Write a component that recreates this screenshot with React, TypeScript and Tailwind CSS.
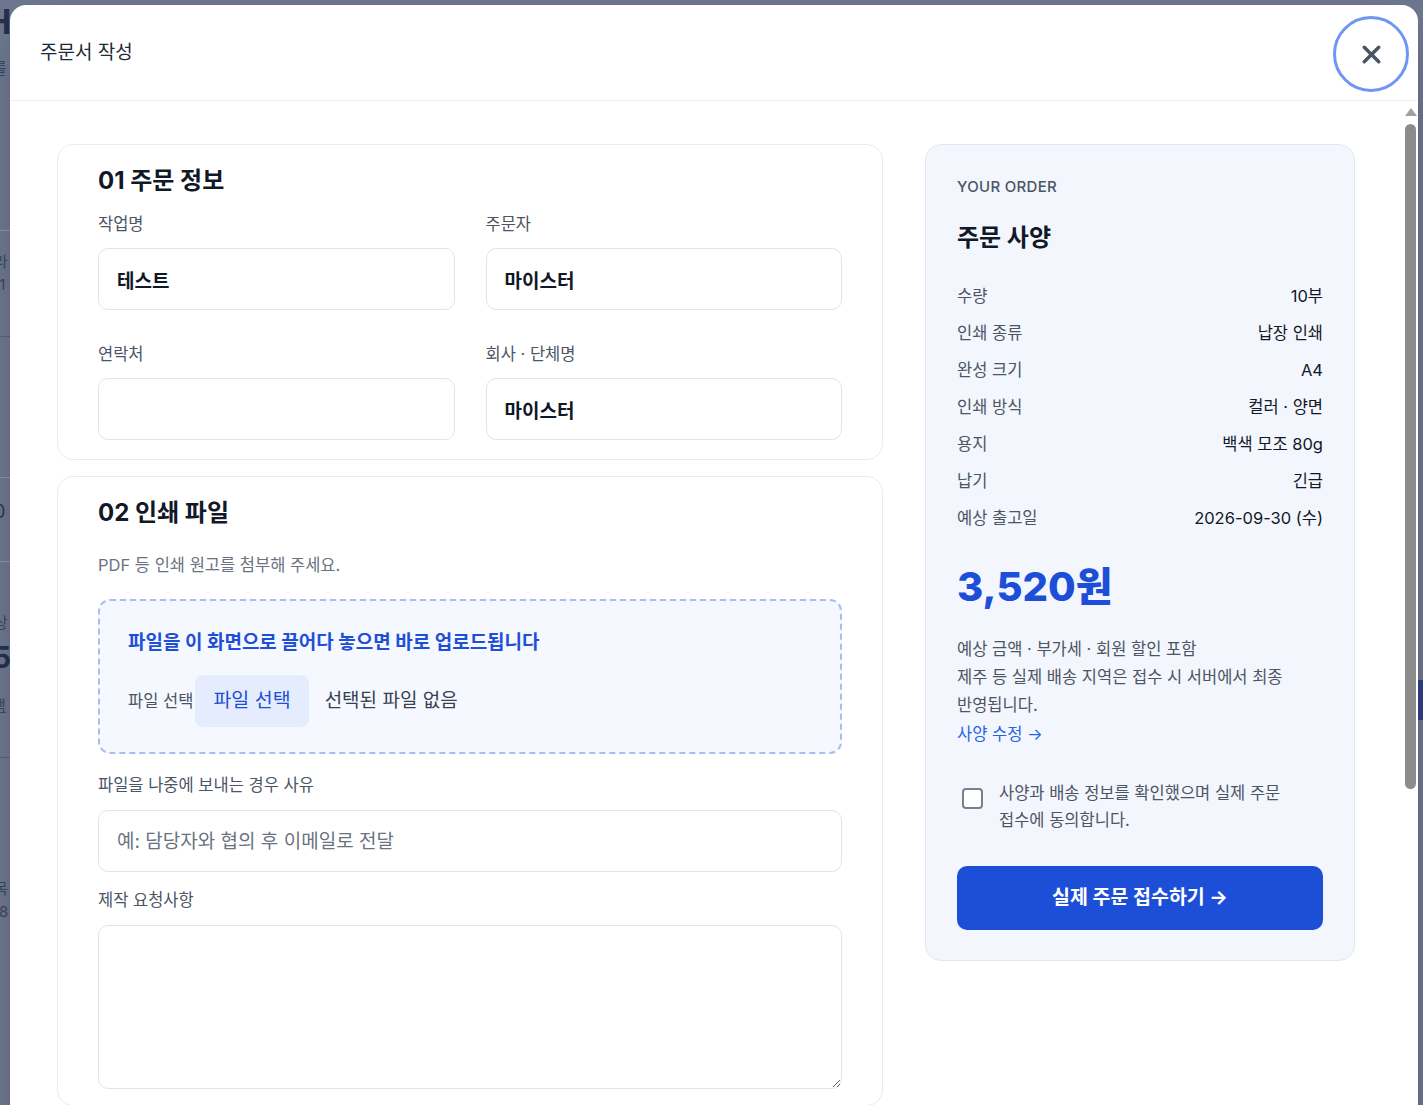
import { X } from "lucide-react";

const specs = [
  ["수량", "10부"],
  ["인쇄 종류", "납장 인쇄"],
  ["완성 크기", "A4"],
  ["인쇄 방식", "컬러 · 양면"],
  ["용지", "백색 모조 80g"],
  ["납기", "긴급"],
  ["예상 출고일", "2026-09-30 (수)"],
];

function Field({ label, value, placeholder }: { label: string; value?: string; placeholder?: string }) {
  return (
    <label className="block">
      <span className="mb-3 block text-[16.5px] leading-6 text-[#4b5563]">{label}</span>
      <input
        readOnly
        value={value ?? ""}
        placeholder={placeholder}
        className="h-[62px] w-full rounded-[10px] border border-[#dfe5ef] bg-white px-[18px] text-[19px] font-semibold text-[#111827] outline-none placeholder:font-normal placeholder:text-[#6b7280]"
      />
    </label>
  );
}

function Card({ title, children }: { title: string; children: React.ReactNode }) {
  return (
    <section className="rounded-2xl border border-[#e6ebf3] bg-white px-10 pt-[19px] pb-[19px]">
      <h2 className="pt-px text-[24px] font-bold leading-8 text-[#111827]">{title}</h2>
      {children}
    </section>
  );
}

export default function App() {
  return (
    <div className="relative h-[1105px] overflow-hidden break-keep bg-[#6d7690] font-[Inter,'Noto_Sans_CJK_KR',sans-serif]">
      {/* page behind the overlay */}
      <div className="flex flex-col text-[#25304a]">
        <div className="-ml-[14px] mt-[2px] text-[34px] font-bold leading-10">H</div>
        <div className="-ml-[8px] mt-[14px] text-[16px] text-[#3b4560]">를</div>
        <div className="mt-[150px] h-px w-[10px] bg-[#8a93ab]" />
        <div className="-ml-[6px] mt-[20px] text-[15px] text-[#3b4560]">라</div>
        <div className="-ml-[10px] text-[15px] text-[#3b4560]">31</div>
        <div className="mt-[40px] h-px w-[10px] bg-[#56607c]" />
        <div className="mt-[140px] h-px w-[10px] bg-[#8a93ab]" />
        <div className="-ml-[6px] mt-[20px] text-[18px] text-[#2b3550]">0</div>
        <div className="mt-[36px] h-px w-[10px] bg-[#8a93ab]" />
        <div className="-ml-[6px] mt-[50px] text-[15px] text-[#3b4560]">상</div>
        <div className="-ml-[8px] mt-[4px] text-[30px] font-bold leading-9">5</div>
        <div className="-ml-[8px] mt-[20px] text-[15px] text-[#3b4560] underline">액</div>
        <div className="mt-[40px] h-px w-[10px] bg-[#56607c]" />
        <div className="-ml-[6px] mt-[120px] text-[15px] text-[#3b4560]">목</div>
        <div className="-ml-[10px] text-[15px] text-[#3b4560]">58</div>
      </div>

      <div className="absolute left-[10px] top-[5px] flex h-[1140px] w-[1408px] flex-col overflow-hidden rounded-2xl bg-white shadow-2xl">
        <header className="flex h-[96px] shrink-0 items-center justify-between border-b border-[#edf0f5] pl-[30px] pr-[9px]">
          <h1 className="text-[19px] leading-7 text-[#1f2937]">주문서 작성</h1>
          <button className="mt-[3px] flex h-[76px] w-[76px] items-center justify-center rounded-full border-[3px] border-[#7096f4] text-[#4b5563]">
            <X size={29} strokeWidth={2.9} />
          </button>
        </header>

        <div className="flex min-h-0 flex-1">
          <div className="min-w-0 flex-1 overflow-hidden pl-[47px] pr-12 pt-[43px] pb-12">
            <div className="grid grid-cols-[1fr_430px] items-start gap-[42px]">
              <div className="flex flex-col gap-4">
                <Card title="01 주문 정보">
                  <div className="mt-[15px] grid grid-cols-2 gap-x-[31px] gap-y-8">
                    <Field label="작업명" value="테스트" />
                    <Field label="주문자" value="마이스터" />
                    <Field label="연락처" />
                    <Field label="회사 · 단체명" value="마이스터" />
                  </div>
                </Card>

                <section className="rounded-2xl border border-[#e6ebf3] bg-white px-10 pt-[19px] pb-4">
                  <h2 className="pt-px text-[24px] font-bold leading-8 text-[#111827]">02 인쇄 파일</h2>
                  <p className="mt-6 text-[16.5px] leading-6 text-[#6b7280]">PDF 등 인쇄 원고를 첨부해 주세요.</p>

                  <div className="mt-[22px] rounded-xl border-2 border-dashed border-[#aabcf0] bg-[#f5f8ff] px-7 pt-[28px] pb-[25px]">
                    <p className="text-[19px] font-bold leading-7 text-[#1e4fd6]">파일을 이 화면으로 끌어다 놓으면 바로 업로드됩니다</p>
                    <div className="mt-[18px] flex items-center">
                      <span className="text-[16.5px] text-[#4b5563]">파일 선택</span>
                      <span className="ml-[2px] flex h-[52px] items-center rounded-lg bg-[#e4ecfd] px-[18px] text-[19.5px] text-[#1d4ed8]">
                        파일 선택
                      </span>
                      <span className="ml-4 text-[19px] text-[#374151]">선택된 파일 없음</span>
                    </div>
                  </div>

                  <label className="mt-[19px] block">
                    <span className="mb-[13px] block text-[16.5px] leading-6 text-[#4b5563]">파일을 나중에 보내는 경우 사유</span>
                    <input
                      readOnly
                      placeholder="예: 담당자와 협의 후 이메일로 전달"
                      className="h-[62px] w-full rounded-[10px] border border-[#dfe5ef] bg-white px-[18px] text-[19px] outline-none placeholder:text-[#6b7280]"
                    />
                  </label>

                  <label className="mt-4 block">
                    <span className="mb-[13px] block text-[16.5px] leading-6 text-[#4b5563]">제작 요청사항</span>
                    <textarea
                      readOnly
                      className="block h-[164px] w-full resize-y rounded-[10px] border border-[#dfe5ef] bg-white px-[18px] py-4 text-[19px] outline-none"
                    />
                  </label>
                </section>

                <Card title="03 배송 정보">
                  <div className="mt-4 grid grid-cols-2 gap-x-[31px] gap-y-8">
                    <Field label="받는 분" value="마이스터" />
                    <Field label="받는 분 연락처" />
                    <Field label="우편번호" />
                    <Field label="주소" />
                  </div>
                </Card>
              </div>

              <aside className="rounded-2xl border border-[#e1e8f5] bg-[#f3f6fd] px-[31px] pt-[32px] pb-[30px]">
                <p className="text-[15px] font-medium leading-5 tracking-[0.02em] text-[#4b5563]">YOUR ORDER</p>
                <h2 className="mt-[25px] text-[24px] font-bold leading-8 text-[#111827]">주문 사양</h2>

                <dl className="mt-[30px] flex flex-col gap-[13px]">
                  {specs.map(([k, v]) => (
                    <div key={k} className="flex items-center justify-between text-[16.5px] leading-6">
                      <dt className="text-[#4b5563]">{k}</dt>
                      <dd className="text-[#111827]">{v}</dd>
                    </div>
                  ))}
                </dl>

                <p className="mt-[33px] text-[40px] font-extrabold leading-[48px] text-[#1d4ed8]">3,520원</p>

                <p className="mt-6 text-[16.5px] leading-7 text-[#4b5563]">
                  예상 금액 · 부가세 · 회원 할인 포함
                  <br />
                  제주 등 실제 배송 지역은 접수 시 서버에서 최종 반영됩니다.
                </p>
                <a className="mt-[3px] block text-[16.5px] leading-6 text-[#2563eb]">사양 수정 →</a>

                <label className="mt-[34px] flex items-start gap-4">
                  <span className="ml-[5px] mt-2 h-[21px] w-[21px] shrink-0 rounded-[4px] border-2 border-[#7a808b] bg-white" />
                  <span className="text-[16.5px] leading-[27px] text-[#4b5563]">
                    사양과 배송 정보를 확인했으며 실제 주문 접수에 동의합니다.
                  </span>
                </label>

                <button className="mt-[32px] flex h-16 w-full items-center justify-center rounded-[10px] bg-[#1d4ed8] text-[19.5px] font-bold text-white">
                  실제 주문 접수하기 →
                </button>
              </aside>
            </div>
          </div>

          {/* scrollbar */}
          <div className="flex w-[15px] shrink-0 flex-col items-center pt-[7px]">
            <div className="h-0 w-0 border-x-[6px] border-b-[8px] border-x-transparent border-b-[#a0a0a0]" />
            <div className="mt-[8px] h-[665px] w-[11px] rounded-full bg-[#8c8c8c]" />
          </div>
        </div>
      </div>

      <div className="absolute right-0 top-[680px] h-[40px] w-[5px] bg-[#2a3a7a]" />
    </div>
  );
}
